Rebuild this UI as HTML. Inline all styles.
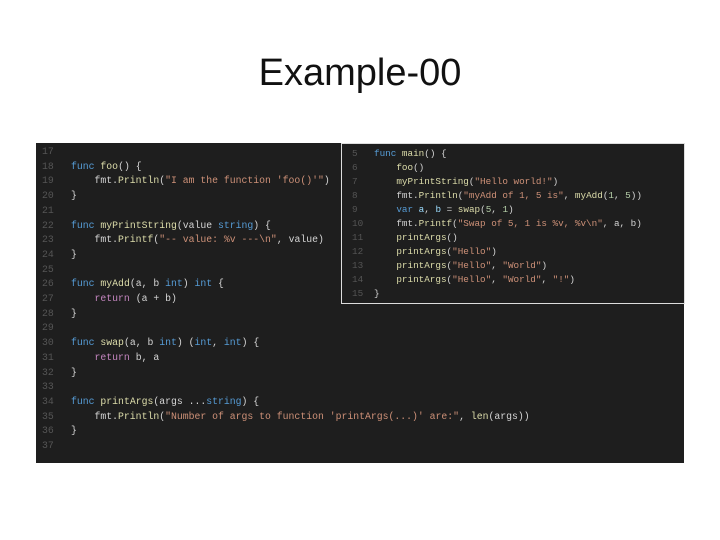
<!DOCTYPE html>
<html><head><meta charset="utf-8"><style>
body{margin:0;width:720px;height:540px;background:#fff;position:relative;overflow:hidden;font-family:"Liberation Sans",sans-serif}
h1{position:absolute;top:52px;left:0;width:720px;text-align:center;margin:0;font-weight:normal;font-size:38px;color:#111}
.ed{position:absolute;background:#1e1e1e;font-family:"Liberation Mono",monospace;color:#d4d4d4;white-space:pre}
#l{left:36px;top:143px;width:648px;height:320px;font-size:9.8px}
#l .r{position:absolute;height:14.7px;line-height:14.7px}
#r{left:341px;top:143px;width:342px;height:159px;border:1px solid #ddd;font-size:9.3px}
#r .r{position:absolute;height:14px;line-height:14px}
.n{position:absolute;color:#555}
.k{color:#569cd6}.f{color:#dcdcaa}.s{color:#ce9178}.p{color:#c586c0}.d{color:#b5cea8}.v{color:#9cdcfe}
</style></head><body>
<h1>Example-00</h1>
<div class="ed" id="l">
<div class="r" style="top:2px;left:6px;width:640px"><span class="n">17</span></div>
<div class="r" style="top:16.7px;left:6px"><span class="n">18</span><span style="position:absolute;left:29px"><span class="k">func</span> <span class="f">foo</span>() {</span></div>
<div class="r" style="top:31.4px;left:6px"><span class="n">19</span><span style="position:absolute;left:29px">    fmt.<span class="f">Println</span>(<span class="s">"I am the function 'foo()'"</span>)</span></div>
<div class="r" style="top:46.1px;left:6px"><span class="n">20</span><span style="position:absolute;left:29px">}</span></div>
<div class="r" style="top:60.8px;left:6px"><span class="n">21</span></div>
<div class="r" style="top:75.5px;left:6px"><span class="n">22</span><span style="position:absolute;left:29px"><span class="k">func</span> <span class="f">myPrintString</span>(value <span class="k">string</span>) {</span></div>
<div class="r" style="top:90.2px;left:6px"><span class="n">23</span><span style="position:absolute;left:29px">    fmt.<span class="f">Printf</span>(<span class="s">"-- value: %v ---\n"</span>, value)</span></div>
<div class="r" style="top:104.9px;left:6px"><span class="n">24</span><span style="position:absolute;left:29px">}</span></div>
<div class="r" style="top:119.6px;left:6px"><span class="n">25</span></div>
<div class="r" style="top:134.3px;left:6px"><span class="n">26</span><span style="position:absolute;left:29px"><span class="k">func</span> <span class="f">myAdd</span>(a, b <span class="k">int</span>) <span class="k">int</span> {</span></div>
<div class="r" style="top:149px;left:6px"><span class="n">27</span><span style="position:absolute;left:29px">    <span class="p">return</span> (a + b)</span></div>
<div class="r" style="top:163.7px;left:6px"><span class="n">28</span><span style="position:absolute;left:29px">}</span></div>
<div class="r" style="top:178.4px;left:6px"><span class="n">29</span></div>
<div class="r" style="top:193.1px;left:6px"><span class="n">30</span><span style="position:absolute;left:29px"><span class="k">func</span> <span class="f">swap</span>(a, b <span class="k">int</span>) (<span class="k">int</span>, <span class="k">int</span>) {</span></div>
<div class="r" style="top:207.8px;left:6px"><span class="n">31</span><span style="position:absolute;left:29px">    <span class="p">return</span> b, a</span></div>
<div class="r" style="top:222.5px;left:6px"><span class="n">32</span><span style="position:absolute;left:29px">}</span></div>
<div class="r" style="top:237.2px;left:6px"><span class="n">33</span></div>
<div class="r" style="top:251.9px;left:6px"><span class="n">34</span><span style="position:absolute;left:29px"><span class="k">func</span> <span class="f">printArgs</span>(args ...<span class="k">string</span>) {</span></div>
<div class="r" style="top:266.6px;left:6px"><span class="n">35</span><span style="position:absolute;left:29px">    fmt.<span class="f">Println</span>(<span class="s">"Number of args to function 'printArgs(...)' are:"</span>, <span class="f">len</span>(args))</span></div>
<div class="r" style="top:281.3px;left:6px"><span class="n">36</span><span style="position:absolute;left:29px">}</span></div>
<div class="r" style="top:296px;left:6px"><span class="n">37</span></div>
</div>
<div class="ed" id="r">
<div class="r" style="top:3px;left:10px"><span class="n">5</span><span style="position:absolute;left:22px"><span class="k">func</span> <span class="f">main</span>() {</span></div>
<div class="r" style="top:17px;left:10px"><span class="n">6</span><span style="position:absolute;left:22px">    <span class="f">foo</span>()</span></div>
<div class="r" style="top:31px;left:10px"><span class="n">7</span><span style="position:absolute;left:22px">    <span class="f">myPrintString</span>(<span class="s">"Hello world!"</span>)</span></div>
<div class="r" style="top:45px;left:10px"><span class="n">8</span><span style="position:absolute;left:22px">    fmt.<span class="f">Println</span>(<span class="s">"myAdd of 1, 5 is"</span>, <span class="f">myAdd</span>(<span class="d">1</span>, <span class="d">5</span>))</span></div>
<div class="r" style="top:59px;left:10px"><span class="n">9</span><span style="position:absolute;left:22px">    <span class="k">var</span> <span class="v">a</span>, <span class="v">b</span> = <span class="f">swap</span>(<span class="d">5</span>, <span class="d">1</span>)</span></div>
<div class="r" style="top:73px;left:10px"><span class="n">10</span><span style="position:absolute;left:22px">    fmt.<span class="f">Printf</span>(<span class="s">"Swap of 5, 1 is %v, %v\n"</span>, a, b)</span></div>
<div class="r" style="top:87px;left:10px"><span class="n">11</span><span style="position:absolute;left:22px">    <span class="f">printArgs</span>()</span></div>
<div class="r" style="top:101px;left:10px"><span class="n">12</span><span style="position:absolute;left:22px">    <span class="f">printArgs</span>(<span class="s">"Hello"</span>)</span></div>
<div class="r" style="top:115px;left:10px"><span class="n">13</span><span style="position:absolute;left:22px">    <span class="f">printArgs</span>(<span class="s">"Hello"</span>, <span class="s">"World"</span>)</span></div>
<div class="r" style="top:129px;left:10px"><span class="n">14</span><span style="position:absolute;left:22px">    <span class="f">printArgs</span>(<span class="s">"Hello"</span>, <span class="s">"World"</span>, <span class="s">"!"</span>)</span></div>
<div class="r" style="top:143px;left:10px"><span class="n">15</span><span style="position:absolute;left:22px">}</span></div>
</div>
</body></html>
